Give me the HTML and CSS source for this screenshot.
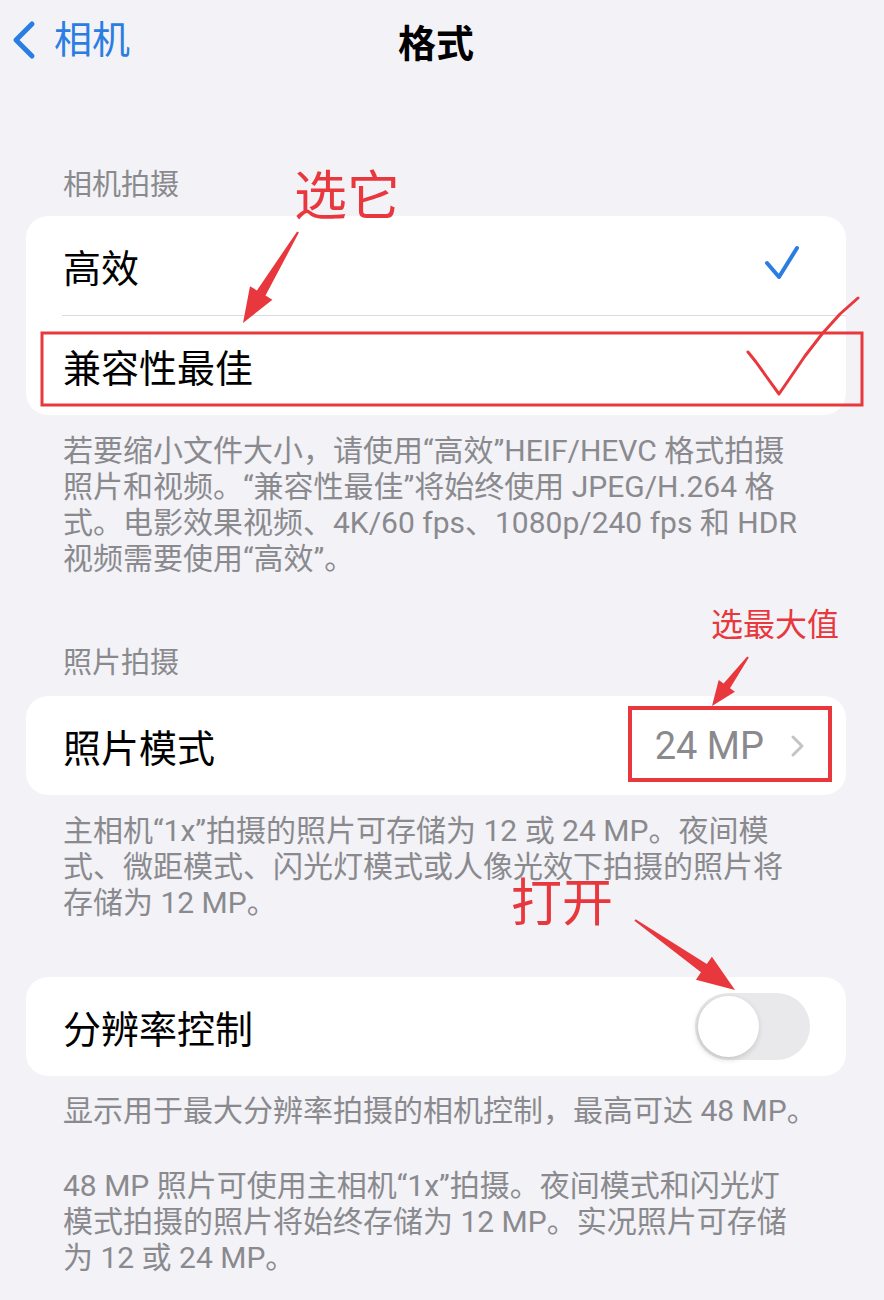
FILE: index.html
```html
<!DOCTYPE html>
<html lang="zh-CN">
<head>
    <meta charset="UTF-8">
    <meta name="viewport" content="width=device-width, initial-scale=1.0">
    <title>格式</title>
    <link rel="stylesheet" href="styles.css">
</head>
<body>
    <div class="page">
        <div class="nav">
            <div class="back">
                <svg width="30" height="40" viewBox="0 0 30 40"><path d="M24 4 L8 20 L24 36" fill="none" stroke="#2a7de1" stroke-width="5" stroke-linecap="round" stroke-linejoin="round"/></svg>
                <span>相机</span>
            </div>
            <div class="title">格式</div>
        </div>

        <div class="hdr hdr1">相机拍摄</div>
        <div class="card">
            <div class="row">
                <span>高效</span>
                <svg class="chk" width="36" height="36" viewBox="0 0 36 36"><path d="M3 18 L15 32 L33 3" fill="none" stroke="#2a7de1" stroke-width="4" stroke-linecap="round" stroke-linejoin="round"/></svg>
            </div>
            <div class="sep"></div>
            <div class="row">
                <span>兼容性最佳</span>
            </div>
        </div>
        <div class="foot foot1">若要缩小文件大小，请使用“高效”HEIF/HEVC 格式拍摄<br>照片和视频。“兼容性最佳”将始终使用 JPEG/H.264 格<br>式。电影效果视频、4K/60 fps、1080p/240 fps 和 HDR<br>视频需要使用“高效”。</div>

        <div class="hdr hdr2">照片拍摄</div>
        <div class="card">
            <div class="row">
                <span>照片模式</span>
                <div class="val">
                    <span>24 MP</span>
                    <svg width="16" height="24" viewBox="0 0 16 24"><path d="M3 3 L12 12 L3 21" fill="none" stroke="#c4c4c7" stroke-width="3" stroke-linecap="round" stroke-linejoin="round"/></svg>
                </div>
            </div>
        </div>
        <div class="foot foot2">主相机“1x”拍摄的照片可存储为 12 或 24 MP。夜间模<br>式、微距模式、闪光灯模式或人像光效下拍摄的照片将<br>存储为 12 MP。</div>

        <div class="card card3">
            <div class="row">
                <span>分辨率控制</span>
                <div class="tgl"><div class="knob"></div></div>
            </div>
        </div>
        <div class="foot foot3">显示用于最大分辨率拍摄的相机控制，最高可达 48 MP。</div>
        <div class="foot foot4">48 MP 照片可使用主相机“1x”拍摄。夜间模式和闪光灯<br>模式拍摄的照片将始终存储为 12 MP。实况照片可存储<br>为 12 或 24 MP。</div>

        <!-- 标注 -->
        <svg class="marks" width="884" height="1300" viewBox="0 0 884 1300">
            <g fill="#e8383d">
                <polygon points="298.9,232.5 265.5,295.6 272.4,299.7 243,323 250,286.3 256.9,290.4 297.1,231.5"/>
                <polygon points="748.8,657.6 730,688.2 734.9,691.8 712,706 718.7,679.9 723.6,683.5 747.2,656.4"/>
                <polygon points="634.4,920.8 701,972.3 695.9,979.7 735,990 711.9,956.7 706.8,964.1 635.6,919.2"/>
            </g>
            <g fill="none" stroke="#e8383d">
                <rect x="42" y="333" width="820" height="72" stroke-width="3"/>
                <rect x="630" y="708" width="200" height="72" stroke-width="4"/>
                <polyline points="748,352 756,362 766,376 779,394 790,378 805,356 822,334 840,314 858,298" stroke-width="3" stroke-linejoin="round" stroke-linecap="round"/>
            </g>
        </svg>
        <div class="lbl lbl1">选它</div>
        <div class="lbl lbl2">选最大值</div>
        <div class="lbl lbl3">打开</div>
    </div>
</body>
</html>
```

FILE: styles.css
```css
body {
    margin: 0;
    background: #f2f2f7;
    font-family: Roboto, "Noto Sans CJK SC", sans-serif;
}

.page {
    position: relative;
    width: 884px;
    height: 1300px;
    overflow: hidden;
}

.nav {
    position: relative;
    height: 80px;
    display: flex;
    align-items: center;
    justify-content: center;
}

.back {
    position: absolute;
    left: 8px;
    top: 20px;
    display: flex;
    align-items: center;
    gap: 16px;
    color: #2a7de1;
    font-size: 38px;
    line-height: 40px;
}

.title {
    margin-right: 12px;
    font-size: 38px;
    font-weight: bold;
    color: #000;
}

.hdr {
    padding-left: 63px;
    font-size: 29px;
    line-height: 36px;
    color: #8a8a8e;
}

.hdr1 {
    margin-top: 87px;
    margin-bottom: 13px;
}

.hdr2 {
    margin-top: 68px;
    margin-bottom: 15px;
}

.card {
    margin: 0 38px 0 26px;
    background: #fff;
    border-radius: 22px;
}

.card3 {
    margin-top: 56px;
}

.row {
    height: 99px;
    padding: 0 46px 0 37px;
    display: flex;
    align-items: center;
    justify-content: space-between;
    font-size: 38px;
    color: #000;
}

.sep {
    height: 1px;
    margin-left: 36px;
    background: #dcdce0;
}

.chk {
    margin-top: -6px;
}

.val {
    display: flex;
    align-items: center;
    gap: 26px;
    margin-right: -6px;
    color: #8a8a8e;
    font-size: 38px;
}

.tgl {
    width: 115px;
    height: 67px;
    margin-right: -10px;
    border-radius: 34px;
    background: #e9e9eb;
    position: relative;
}

.knob {
    position: absolute;
    left: 3px;
    top: 3px;
    width: 61px;
    height: 61px;
    border-radius: 50%;
    background: #fff;
    box-shadow: -1px 2px 6px rgba(0,0,0,0.18);
}

.foot {
    padding-left: 63px;
    font-size: 30px;
    line-height: 36px;
    color: #8a8a8e;
    white-space: nowrap;
}

.foot1 {
    margin-top: 18px;
}

.foot2 {
    margin-top: 18px;
}

.foot3 {
    margin-top: 17px;
}

.foot4 {
    margin-top: 39px;
}

.marks {
    position: absolute;
    left: 0;
    top: 0;
    pointer-events: none;
}

.lbl {
    position: absolute;
    color: #e8383d;
    line-height: 1;
    font-family: "Noto Sans CJK SC", sans-serif;
}

.lbl1 {
    left: 294px;
    top: 166px;
    font-size: 53px;
}

.lbl2 {
    left: 711px;
    top: 606px;
    font-size: 32px;
}

.lbl3 {
    left: 511px;
    top: 874px;
    font-size: 51px;
}
```
